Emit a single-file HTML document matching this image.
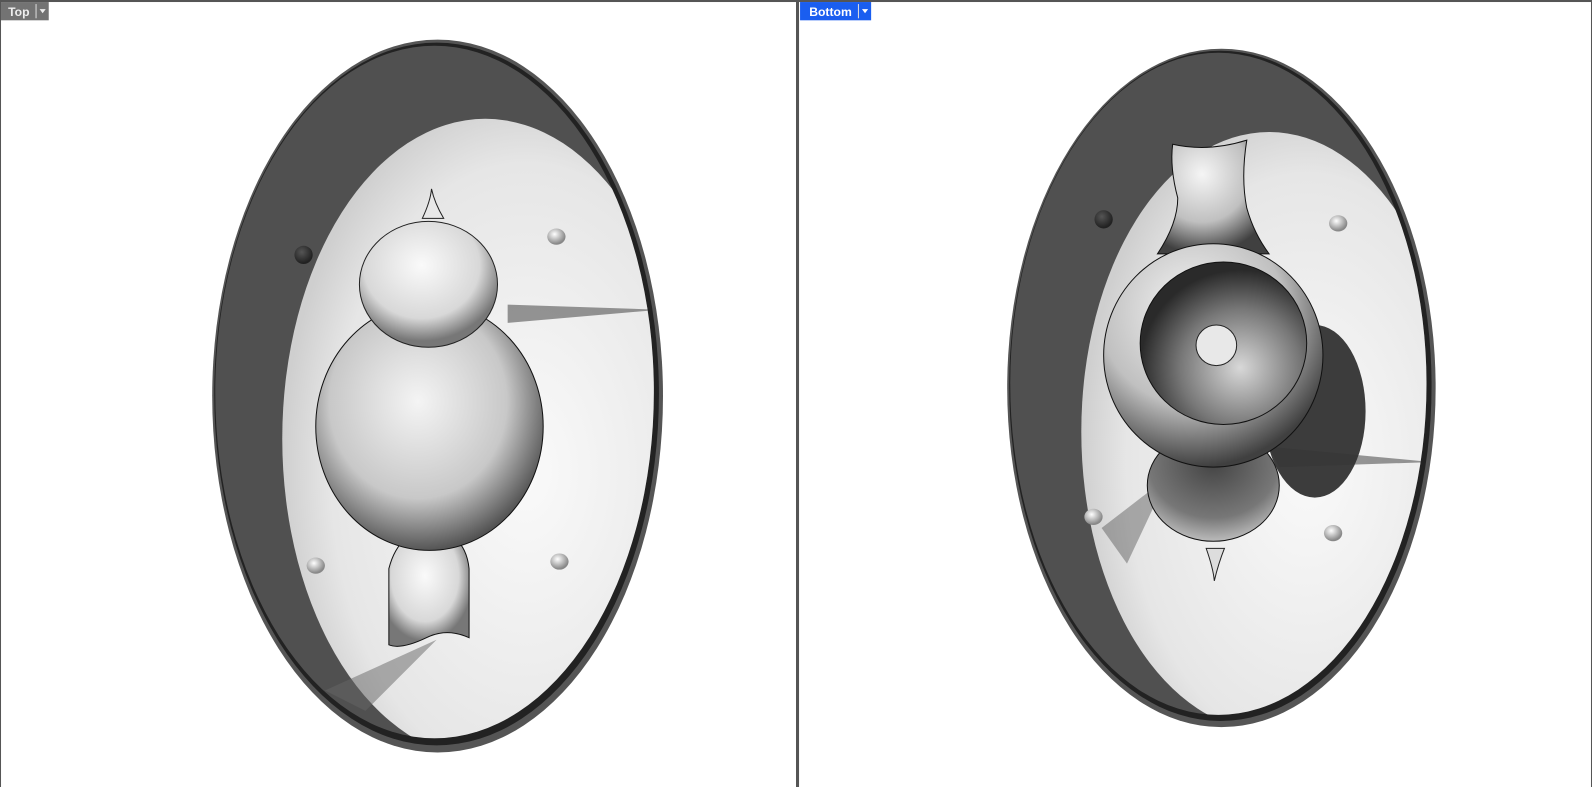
<!DOCTYPE html>
<html><head><meta charset="utf-8"><style>
html,body{margin:0;padding:0;background:#fff;width:1592px;height:787px;overflow:hidden}
svg{display:block}
</style></head><body>
<svg width="1592" height="787" viewBox="0 0 1568 775" preserveAspectRatio="none" xmlns="http://www.w3.org/2000/svg">
<defs>
<radialGradient id="bodyG" cx="0.45" cy="0.4" r="0.65"><stop offset="0" stop-color="#f4f4f4"/><stop offset="0.6" stop-color="#c8c8c8"/><stop offset="1" stop-color="#3a3a3a"/></radialGradient>
<radialGradient id="headG" cx="0.45" cy="0.35" r="0.6"><stop offset="0" stop-color="#fafafa"/><stop offset="0.7" stop-color="#d8d8d8"/><stop offset="1" stop-color="#777"/></radialGradient>
<radialGradient id="faceG" cx="0.6" cy="0.55" r="0.6"><stop offset="0" stop-color="#fafafa"/><stop offset="0.8" stop-color="#e6e6e6"/><stop offset="1" stop-color="#cfcfcf"/></radialGradient>
<radialGradient id="donutG" cx="0.6" cy="0.65" r="0.6"><stop offset="0" stop-color="#d8d8d8"/><stop offset="0.6" stop-color="#777"/><stop offset="1" stop-color="#2a2a2a"/></radialGradient>
<radialGradient id="vaseG" cx="0.4" cy="0.3" r="0.7"><stop offset="0" stop-color="#f5f5f5"/><stop offset="0.6" stop-color="#c0c0c0"/><stop offset="1" stop-color="#404040"/></radialGradient>
<radialGradient id="bulbG" cx="0.5" cy="0.3" r="0.7"><stop offset="0" stop-color="#444"/><stop offset="0.7" stop-color="#777"/><stop offset="1" stop-color="#bbb"/></radialGradient>
<radialGradient id="peg" cx="0.4" cy="0.35" r="0.6"><stop offset="0" stop-color="#fff"/><stop offset="1" stop-color="#888"/></radialGradient>
<radialGradient id="pegD" cx="0.4" cy="0.35" r="0.6"><stop offset="0" stop-color="#555"/><stop offset="1" stop-color="#222"/></radialGradient>
<clipPath id="cl1"><ellipse cx="428" cy="386" rx="216" ry="341"/></clipPath>
<clipPath id="cl2"><ellipse cx="1200" cy="378" rx="205" ry="326"/></clipPath>
</defs>
<rect width="1568" height="775" fill="#fff"/>
<rect x="0" y="0" width="1568" height="2" fill="#555"/>
<rect x="0" y="0" width="1" height="775" fill="#555"/>
<rect x="784" y="0" width="3" height="775" fill="#555"/>
<rect x="1567" y="0" width="1" height="775" fill="#555"/>

<!-- LEFT -->
<ellipse cx="431" cy="390" rx="222" ry="351" fill="#555"/>
<ellipse cx="430" cy="388" rx="219" ry="346" fill="#222"/>
<ellipse cx="428" cy="386" rx="216" ry="341" fill="#505050"/>
<g clip-path="url(#cl1)">
<ellipse cx="478" cy="432" rx="200" ry="315" fill="url(#faceG)"/>
<path d="M320 680 L430 630 L360 700Z" fill="#666" opacity="0.5"/>
<path d="M500 300 L650 305 L500 318Z" fill="#333" opacity="0.5"/>
</g>
<path d="M383 560 Q388 540 400 530 L448 530 Q460 540 462 560 L462 628 Q440 618 420 628 Q395 640 383 635Z" fill="url(#headG)" stroke="#111" stroke-width="1"/>
<ellipse cx="423" cy="420" rx="112" ry="122" fill="url(#bodyG)" stroke="#111" stroke-width="1"/>
<path d="M416 215 Q424 198 425 186 Q428 200 437 215Z" fill="#e8e8e8" stroke="#222" stroke-width="1"/>
<ellipse cx="422" cy="280" rx="68" ry="62" fill="url(#headG)" stroke="#222" stroke-width="1"/>
<circle cx="299" cy="251" r="9" fill="url(#pegD)"/>
<ellipse cx="548" cy="233" rx="9" ry="8" fill="url(#peg)"/>
<ellipse cx="311" cy="557" rx="9" ry="8" fill="url(#peg)"/>
<ellipse cx="551" cy="553" rx="9" ry="8" fill="url(#peg)"/>

<!-- RIGHT -->
<ellipse cx="1203" cy="382" rx="211" ry="334" fill="#555"/>
<ellipse cx="1202" cy="380" rx="208" ry="330" fill="#222"/>
<ellipse cx="1200" cy="378" rx="205" ry="326" fill="#505050"/>
<g clip-path="url(#cl2)">
<ellipse cx="1250" cy="425" rx="185" ry="295" fill="url(#faceG)"/>
<ellipse cx="1295" cy="405" rx="50" ry="85" fill="#3c3c3c"/>
<path d="M1250 440 L1410 455 L1260 460Z" fill="#333" opacity="0.5"/>
<path d="M1085 520 L1150 470 L1110 555Z" fill="#444" opacity="0.4"/>
</g>
<ellipse cx="1195" cy="478" rx="65" ry="55" fill="url(#bulbG)" stroke="#111" stroke-width="1"/>
<path d="M1188 540 Q1195 560 1196 572 Q1200 555 1206 540Z" fill="#ddd" stroke="#222" stroke-width="1"/>
<path d="M1155 142 Q1190 150 1228 138 Q1222 175 1228 205 Q1235 230 1250 250 L1140 250 Q1160 220 1160 195 Q1152 165 1155 142Z" fill="url(#vaseG)" stroke="#111" stroke-width="1"/>
<ellipse cx="1195" cy="350" rx="108" ry="110" fill="url(#vaseG)" stroke="#111" stroke-width="1"/>
<ellipse cx="1205" cy="338" rx="82" ry="80" fill="url(#donutG)" stroke="#111" stroke-width="1"/>
<ellipse cx="1198" cy="340" rx="20" ry="20" fill="#e8e8e8" stroke="#222" stroke-width="1"/>
<circle cx="1087" cy="216" r="9" fill="url(#pegD)"/>
<ellipse cx="1318" cy="220" rx="9" ry="8" fill="url(#peg)"/>
<ellipse cx="1077" cy="509" rx="9" ry="8" fill="url(#peg)"/>
<ellipse cx="1313" cy="525" rx="9" ry="8" fill="url(#peg)"/>

<rect x="1" y="2" width="47" height="18" fill="#737373"/>
<rect x="35" y="4" width="1" height="14" fill="#ddd"/>
<text x="8" y="16" font-family="Liberation Sans, sans-serif" font-weight="bold" font-size="12" fill="#eee">Top</text>
<path d="M39 9 L45 9 L42 13Z" fill="#eee"/>
<rect x="788" y="2" width="70" height="18" fill="#1a5ef0"/>
<rect x="845" y="4" width="1" height="14" fill="#ddd"/>
<text x="797" y="16" font-family="Liberation Sans, sans-serif" font-weight="bold" font-size="12" fill="#fff">Bottom</text>
<path d="M849 9 L855 9 L852 13Z" fill="#fff"/>
</svg>
</body></html>
